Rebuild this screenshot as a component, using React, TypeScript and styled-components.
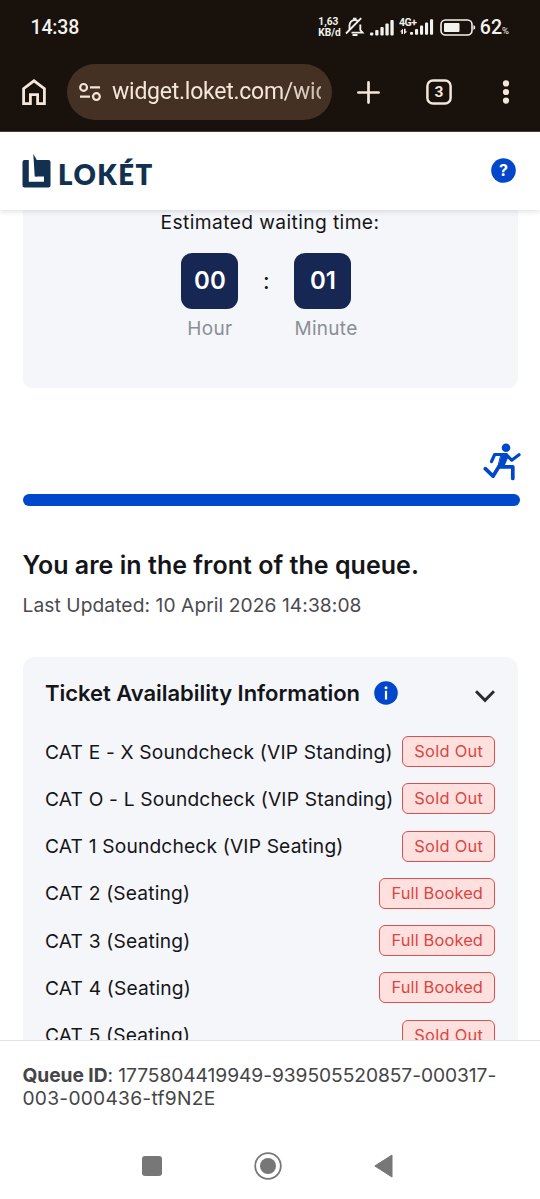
import React from 'react';
import styled, { createGlobalStyle } from 'styled-components';

const GlobalStyle = createGlobalStyle`
  *, *::before, *::after { box-sizing: border-box; }
  body { margin: 0; background: #fff; }
  svg { display: block; flex: none; }
`;

const Screen = styled.div`
  width: 540px;
  height: 1199px;
  display: flex;
  flex-direction: column;
  overflow: hidden;
  background: #fff;
  color: #141518;
  font-family: Inter, 'Liberation Sans', sans-serif;
`;

const Chrome = styled.div`
  height: 132px;
  flex: none;
  background: #18110c;
  border-bottom: 1px solid #4a433d;
  color: #f4e6da;
  font-family: Roboto, sans-serif;
`;

const StatusBar = styled.div`
  height: 54px;
  display: flex;
  align-items: center;
  justify-content: space-between;
  padding: 0 31px 0 30.5px;
  color: #f3f1ee;
`;

const Clock = styled.span`
  font-size: 19.5px;
  font-weight: 500;
  letter-spacing: -0.15px;
`;

const StatusIcons = styled.div`
  display: flex;
  align-items: center;
`;

const NetSpeed = styled.div`
  font-size: 10.2px;
  line-height: 10.4px;
  padding-top: 1px;
  font-weight: 700;
  width: 22px;
  white-space: nowrap;
`;

const Battery = styled.span`
  font-size: 19.5px;
  font-weight: 500;
  margin-left: 3.5px;
  small { font-size: 9.5px; font-weight: 400; }
`;

const Toolbar = styled.div`
  height: 76px;
  display: flex;
  align-items: center;
  padding: 0 22px 0 21px;
`;

const AddressBar = styled.div`
  width: 265px;
  height: 56px;
  margin-left: 20px;
  padding: 0 11px 0 11px;
  border-radius: 28px;
  background: #443123;
  display: flex;
  align-items: center;
  gap: 10px;
`;

const Url = styled.div`
  width: 209px;
  overflow: hidden;
  white-space: nowrap;
  font-size: 23px;
  line-height: 30px;
  letter-spacing: -0.25px;
  mask-image: linear-gradient(90deg, #000 80%, rgba(0, 0, 0, 0.75));
`;

const ToolIcon = styled.div<{ $gap: number }>`
  margin-left: ${(p) => p.$gap}px;
`;

const SiteHeader = styled.header`
  height: 78px;
  flex: none;
  display: flex;
  align-items: center;
  justify-content: space-between;
  padding: 0 24px 2px 22px;
  background: #fff;
  box-shadow: 0 1px 6px rgba(20, 30, 60, 0.16);
  z-index: 1;
`;

const Brand = styled.div`
  display: flex;
  align-items: flex-end;
  gap: 7px;
  height: 36px;
  color: #12304f;
`;

const BrandName = styled.span`
  font-family: Lato, sans-serif;
  font-weight: 800;
  font-size: 27.5px;
  line-height: 26px;
  letter-spacing: 1.5px;
`;

const Content = styled.main`
  height: 830px;
  flex: none;
  overflow: hidden;
  padding: 0 22.5px;
`;

const WaitCard = styled.section`
  height: 178px;
  width: 495px;
  border-radius: 0 0 9px 9px;
  background: #f5f6fa;
  display: flex;
  flex-direction: column;
  align-items: center;
`;

const WaitLabel = styled.div`
  font-size: 19.2px;
  line-height: 24px;
  letter-spacing: 0.4px;
`;

const Timer = styled.div`
  display: flex;
  justify-content: center;
  margin: 19px 1px 0 0;
`;

const TimeUnit = styled.div`
  display: flex;
  flex-direction: column;
  align-items: flex-start;
`;

const TimeBox = styled.div`
  width: 57px;
  height: 56px;
  border-radius: 11px;
  background: #152752;
  color: #fff;
  font-size: 24px;
  font-weight: 600;
  line-height: 56px;
  text-align: center;
`;

const TimeCaption = styled.div`
  min-width: 57px;
  margin-top: 8px;
  font-size: 19px;
  line-height: 24px;
  letter-spacing: 0.3px;
  text-align: center;
  color: #8b8e96;
`;

const Colon = styled.div`
  width: 56px;
  font-size: 23px;
  line-height: 57px;
  text-align: center;
`;

const RunnerRow = styled.div`
  display: flex;
  justify-content: flex-end;
  height: 38px;
  margin-top: 55px;
  margin-right: -3.5px;
`;

const ProgressBar = styled.div`
  height: 12px;
  width: 497px;
  margin-top: 13px;
  border-radius: 6px;
  background: #0047cc;
`;

const QueueTitle = styled.h1`
  margin: 43px 0 0;
  font-size: 25px;
  line-height: 32px;
  font-weight: 600;
  letter-spacing: 0.03px;
  white-space: nowrap;
`;

const Updated = styled.div`
  margin: 12px 0 0;
  font-size: 19.2px;
  line-height: 24px;
  letter-spacing: 0.08px;
  color: #4b4b4f;
`;

const TicketCard = styled.section`
  width: 495px;
  height: 480px;
  margin: 40px 0 0;
  padding: 22px 22.5px 0;
  border-radius: 12px;
  background: #f5f6fa;
`;

const TicketHeader = styled.div`
  display: flex;
  align-items: center;
  height: 28px;
  margin-bottom: 21px;
`;

const TicketTitle = styled.h2`
  margin: 0 13.5px 0 0;
  font-size: 22px;
  line-height: 28px;
  font-weight: 600;
  letter-spacing: -0.03px;
  white-space: nowrap;
`;

const Chevron = styled.div`
  margin: 6px 0 0 auto;
`;

const TicketRow = styled.div`
  height: 47.25px;
  display: flex;
  align-items: center;
  justify-content: space-between;
`;

const TicketName = styled.span`
  font-size: 19.2px;
  line-height: 26px;
  letter-spacing: 0.17px;
  white-space: nowrap;
`;

const StatusTag = styled.span<{ $wide: boolean }>`
  width: ${(p) => (p.$wide ? 116 : 93)}px;
  height: 31px;
  flex: none;
  border: 1px solid #d8514f;
  border-radius: 6px;
  background: #fee0df;
  color: #da4541;
  font-size: 16.4px;
  line-height: 28px;
  letter-spacing: ${(p) => (p.$wide ? 0.15 : 0.3)}px;
  text-align: center;
  text-indent: 0.5px;
  white-space: nowrap;
`;

const QueueFooter = styled.footer`
  height: 93px;
  flex: none;
  border-top: 1px solid #e2e2e5;
  padding: 23px 0 0 22.5px;
  font-size: 19.2px;
  line-height: 23.3px;
  color: #454547;
  white-space: nowrap;
  b { font-weight: 700; }
`;

const QueueLine = styled.div<{ $spacing: number }>`
  letter-spacing: ${(p) => p.$spacing}px;
`;

const NavBar = styled.nav`
  height: 66px;
  display: flex;
  align-items: center;
  padding-left: 142px;
`;

const NavItem = styled.div<{ $gap?: number }>`
  margin-left: ${(p) => p.$gap ?? 0}px;
`;

const tickets = [
  ['CAT E - X Soundcheck (VIP Standing)', 'Sold Out'],
  ['CAT O - L Soundcheck (VIP Standing)', 'Sold Out'],
  ['CAT 1 Soundcheck (VIP Seating)', 'Sold Out'],
  ['CAT 2 (Seating)', 'Full Booked'],
  ['CAT 3 (Seating)', 'Full Booked'],
  ['CAT 4 (Seating)', 'Full Booked'],
  ['CAT 5 (Seating)', 'Sold Out'],
];

const MutedBell = () => (
  <svg width="20" height="20" viewBox="0 0 20 20" fill="none" stroke="#f3f1ee" strokeWidth="1.9">
    <path d="M4.5 12.5V8.5C4.5 5.3 6.7 3 9.8 3c1.4 0 2.6.5 3.5 1.4M15.3 7.5V13l2.2 2.6H6.5" />
    <path d="M1 16.5 16.2 1.2" />
    <path d="M8 1.6h3.5M7.5 18h5" />
  </svg>
);

const Signal = () => (
  <svg width="24" height="17" viewBox="0 0 24 17" fill="#f3f1ee">
    <rect x="0" y="13.5" width="3.3" height="3" rx="1" />
    <rect x="5.2" y="11" width="3.3" height="5.5" rx="1" />
    <rect x="10.4" y="8" width="3.3" height="8.5" rx="1" />
    <rect x="15.4" y="4.5" width="3.3" height="12" rx="1" />
    <rect x="20.4" y="1" width="3.3" height="15.5" rx="1" />
  </svg>
);

const MobileSignal = () => (
  <svg width="35" height="18" viewBox="0 0 35 18" fill="#f3f1ee">
    <text x="0" y="8.2" fontSize="10.5" fontWeight="700" fontFamily="Roboto" textLength="18">4G+</text>
    <path d="M1 13.6 4 10.8V16H2.4v-2.4zM5 10.8h1.6v2.600H8.400L5 16.200z" />
    <rect x="11" y="14" width="3.1" height="2.8" rx="1" />
    <rect x="16" y="11" width="3.1" height="5.8" rx="1" />
    <rect x="21" y="7.5" width="3.1" height="9.3" rx="1" />
    <rect x="26" y="4.5" width="3.1" height="12.3" rx="1" />
    <rect x="31" y="1.2" width="3.1" height="15.6" rx="1" />
  </svg>
);

const BatteryIcon = () => (
  <svg width="36" height="17" viewBox="0 0 36 17">
    <rect x="1" y="1" width="31" height="15" rx="4.5" fill="none" stroke="#f3f1ee" strokeWidth="1.6" />
    <rect x="4" y="4" width="15.5" height="9" rx="1" fill="#f3f1ee" />
    <path d="M33.4 6.2c1.4.3 1.8 1 1.8 2.3s-.4 2-1.8 2.3z" fill="#f3f1ee" />
  </svg>
);

const Runner = () => (
  <svg width="38" height="38" viewBox="0 0 38 38" fill="none" stroke="#0047cc" strokeLinecap="round" strokeLinejoin="round">
    <circle cx="23" cy="4.8" r="4.3" fill="#0047cc" stroke="none" />
    <path d="M8.5 18.5 11.7 11.5H23L28.7 17.2 36 11.7" strokeWidth="3.2" />
    <path d="M18.5 10.5H24L25.3 13 20.8 23.5 15 24.5z" fill="#0047cc" strokeWidth="1" />
    <path d="M16 23.5 10 33.2 2.3 25.7" strokeWidth="3.7" />
    <path d="M17 23.9H29.8V35.5" strokeWidth="3.7" />
  </svg>
);

export default function App() {
  return (
    <>
      <GlobalStyle />
      <Screen>
        <Chrome>
          <StatusBar>
            <Clock>14:38</Clock>
            <StatusIcons>
              <NetSpeed>1,63<br />KB/d</NetSpeed>
              <ToolIcon $gap={5}><MutedBell /></ToolIcon>
              <ToolIcon $gap={5}><Signal /></ToolIcon>
              <ToolIcon $gap={5}><MobileSignal /></ToolIcon>
              <ToolIcon $gap={6}><BatteryIcon /></ToolIcon>
              <Battery>62<small>%</small></Battery>
            </StatusIcons>
          </StatusBar>
          <Toolbar>
            <svg width="26" height="28" viewBox="0 0 26 28" fill="none" stroke="#f4e6da" strokeWidth="2.8">
              <path d="M2.6 25.6V10.6L13 2.8l10.4 7.8v15H16.6V16.6H9.4v9z" />
            </svg>
            <AddressBar>
              <svg width="24" height="20" viewBox="0 0 24 20" fill="none" stroke="#f4e6da" strokeWidth="2.2">
                <circle cx="5.6" cy="5.4" r="3.4" />
                <path d="M12 5.4h10M2 14.6h10" />
                <circle cx="18.4" cy="14.6" r="3.4" />
              </svg>
              <Url>widget.loket.com/widget</Url>
            </AddressBar>
            <ToolIcon $gap={25}>
              <svg width="23" height="23" viewBox="0 0 23 23" stroke="#f4e6da" strokeWidth="2.7" strokeLinecap="round">
                <path d="M1.4 11.5h20.2M11.5 1.4v20.2" />
              </svg>
            </ToolIcon>
            <ToolIcon $gap={46}>
              <svg width="26" height="26" viewBox="0 0 26 26">
                <rect x="1.4" y="1.4" width="23.2" height="23.2" rx="5.5" fill="none" stroke="#f4e6da" strokeWidth="2.5" />
                <text x="13" y="18.3" fill="#f4e6da" fontSize="15.5" fontWeight="700" fontFamily="Roboto" textAnchor="middle">3</text>
              </svg>
            </ToolIcon>
            <ToolIcon $gap={50}>
              <svg width="8" height="24" viewBox="0 0 8 24" fill="#f4e6da">
                <circle cx="4" cy="3.4" r="3.1" />
                <circle cx="4" cy="12" r="3.1" />
                <circle cx="4" cy="20.6" r="3.1" />
              </svg>
            </ToolIcon>
          </Toolbar>
        </Chrome>

        <SiteHeader>
          <Brand>
            <svg width="29" height="35" viewBox="0 0 29 35">
              <path d="M2.5 7H6.8V28.8H22V23.6H13.8V7H26.5a2 2 0 0 1 2 2V32.5a2 2 0 0 1-2 2H2.5a2 2 0 0 1-2-2V9a2 2 0 0 1 2-2z" fill="#12304f" />
              <path d="M11.3.8 15 7.5V23.6H12.7z" fill="#12304f" />
            </svg>
            <BrandName>LOKÉT</BrandName>
          </Brand>
          <svg width="25" height="25" viewBox="0 0 25 25">
            <circle cx="12.5" cy="12.5" r="12.3" fill="#0047cc" />
            <text x="12.5" y="18.2" fill="#fff" fontSize="16" fontWeight="700" fontFamily="Inter" textAnchor="middle">?</text>
          </svg>
        </SiteHeader>

        <Content>
          <WaitCard>
            <WaitLabel>Estimated waiting time:</WaitLabel>
            <Timer>
              <TimeUnit>
                <TimeBox>00</TimeBox>
                <TimeCaption>Hour</TimeCaption>
              </TimeUnit>
              <Colon>:</Colon>
              <TimeUnit>
                <TimeBox>01</TimeBox>
                <TimeCaption>Minute</TimeCaption>
              </TimeUnit>
            </Timer>
          </WaitCard>

          <RunnerRow><Runner /></RunnerRow>
          <ProgressBar />

          <QueueTitle>You are in the front of the queue.</QueueTitle>
          <Updated>Last Updated: 10 April 2026 14:38:08</Updated>

          <TicketCard>
            <TicketHeader>
              <TicketTitle>Ticket Availability Information</TicketTitle>
              <svg width="24" height="24" viewBox="0 0 24 24">
                <circle cx="12" cy="12" r="11.8" fill="#0047cc" />
                <circle cx="12" cy="6.8" r="1.5" fill="#fff" />
                <rect x="10.9" y="9.8" width="2.2" height="8.7" fill="#fff" />
              </svg>
              <Chevron>
                <svg width="20" height="13" viewBox="0 0 20 13" fill="none" stroke="#2b2c30" strokeWidth="3">
                  <path d="M1 1.2 10 10.4 19 1.2" />
                </svg>
              </Chevron>
            </TicketHeader>
            {tickets.map(([name, status]) => (
              <TicketRow key={name}>
                <TicketName>{name}</TicketName>
                <StatusTag $wide={status === 'Full Booked'}>{status}</StatusTag>
              </TicketRow>
            ))}
          </TicketCard>
        </Content>

        <QueueFooter>
          <QueueLine $spacing={-0.06}><b>Queue ID</b>: 1775804419949-939505520857-000317-</QueueLine>
          <QueueLine $spacing={0.25}>003-000436-tf9N2E</QueueLine>
        </QueueFooter>

        <NavBar>
          <NavItem>
            <svg width="20" height="20" viewBox="0 0 20 20"><rect width="20" height="20" rx="3" fill="#777" /></svg>
          </NavItem>
          <NavItem $gap={92}>
            <svg width="28" height="28" viewBox="0 0 28 28">
              <circle cx="14" cy="14" r="12.8" fill="none" stroke="#777" strokeWidth="1.8" />
              <circle cx="14" cy="14" r="8" fill="#777" />
            </svg>
          </NavItem>
          <NavItem $gap={92}>
            <svg width="19" height="24" viewBox="0 0 19 24">
              <path d="M.8 12 18 1v22z" fill="#777" stroke="#777" strokeWidth="1" strokeLinejoin="round" />
            </svg>
          </NavItem>
        </NavBar>
      </Screen>
    </>
  );
}
